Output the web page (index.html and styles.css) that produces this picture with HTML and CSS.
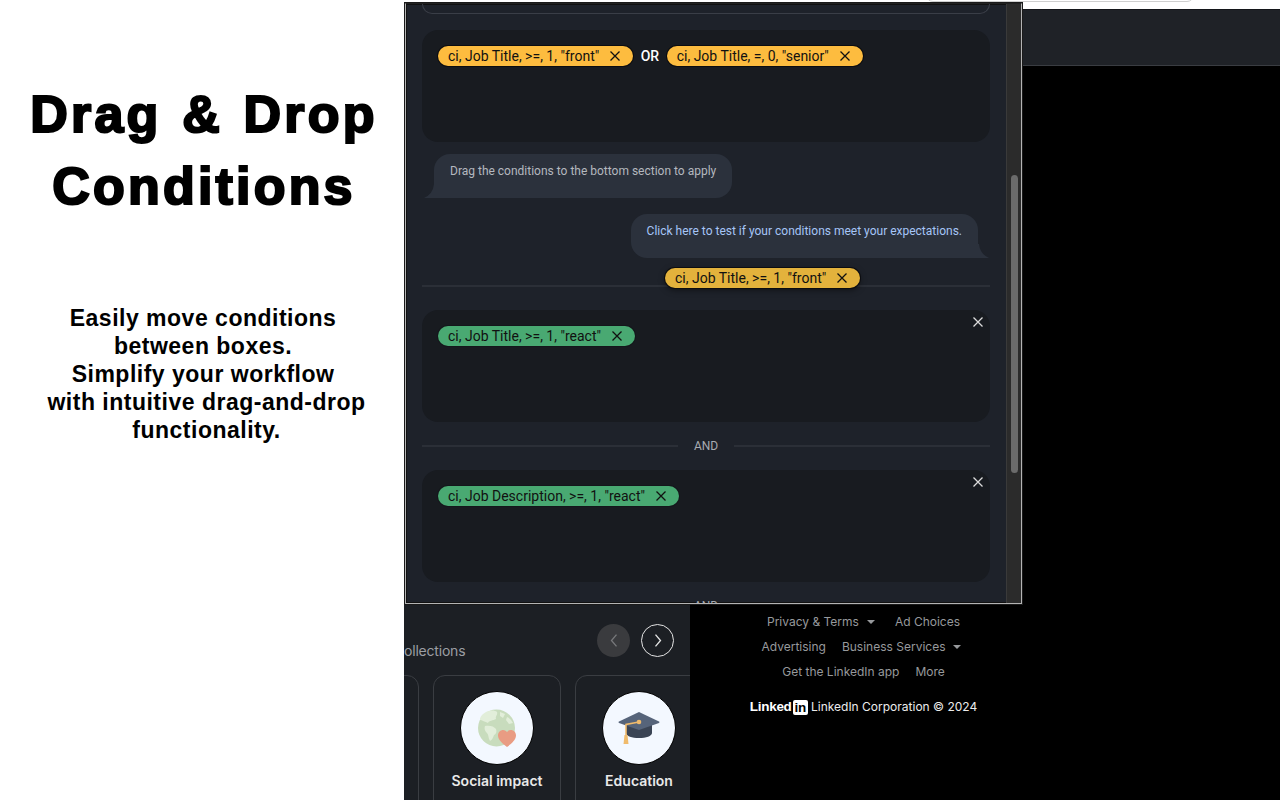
FILE: index.html
```html
<!DOCTYPE html>
<html lang="en">
<head>
<meta charset="utf-8">
<title>Drag &amp; Drop Conditions</title>
<link rel="stylesheet" href="styles.css">
</head>
<body>
<svg class="sprite" width="0" height="0" aria-hidden="true">
  <symbol id="x" viewBox="0 0 12 12"><path d="M1.5 1.5l9 9M10.5 1.5l-9 9" fill="none" stroke="currentColor" stroke-width="1.3"/></symbol>
</svg>
<div class="page">
  <section class="intro">
    <h1 class="title">Drag &amp; Drop<br>Conditions</h1>
    <p class="lead">Easily move conditions&nbsp;<br>between boxes.&nbsp;<br>Simplify your workflow&nbsp;<br>with intuitive drag-and-drop<br>functionality.</p>
  </section>

  <section class="backdrop">
    <div class="omnibox"></div>
    <div class="topbar"></div>
    <div class="lower">
      <div class="feed">
        <div class="feed-head">
          <span class="feed-title">ollections</span>
          <div class="feed-nav">
            <span class="nav-btn nav-off"><svg viewBox="0 0 12 18" class="chev"><path d="M9 2L3 9l6 7" fill="none" stroke="currentColor" stroke-width="1.6"/></svg></span>
            <span class="nav-btn nav-on"><svg viewBox="0 0 12 18" class="chev"><path d="M3 2l6 7-6 7" fill="none" stroke="currentColor" stroke-width="1.6"/></svg></span>
          </div>
        </div>
        <div class="cards">
          <div class="card"></div>
          <div class="card">
            <span class="disc">
              <svg viewBox="0 0 72 72" class="disc-art">
                <circle cx="35.500" cy="36" r="18.500" fill="#c8dcbd"/>
                <path d="M25 20c4-2 9-2 11 0 1 3-2 4-1 7-3 2-7 1-8 4-3-1-6-3-8-3 0-4 3-6 6-8zM39 20l5 2-2 4-3-2zM46 25c3 1 5 4 6 6l-4 1-3-4zM24 34c4-1 9 0 11 3 1 3 0 5-2 6-1 3-2 5-4 6-2-3-1-6-3-8-2-2-3-4-2-7z" fill="#e2eeda"/>
                <path d="M46 55c-4-3-9-7-9-11.500 0-3.300 2.500-5.500 5.200-5.500 1.700 0 3 1 3.800 2.200.8-1.200 2.100-2.200 3.800-2.200 2.700 0 5.200 2.200 5.200 5.500 0 4.500-5 8.500-9 11.500z" fill="#e99c83"/>
              </svg>
            </span>
            <span class="card-label">Social impact</span>
          </div>
          <div class="card">
            <span class="disc">
              <svg viewBox="0 0 72 72" class="disc-art">
                <path d="M23 30h26v11c0 3-6 5-13 5s-13-2-13-5z" fill="#3a4454"/>
                <path d="M36 20l20 9.500c.6.4.6 1 0 1.400L36 38 16 31c-.7-.4-.7-1 0-1.400z" fill="#56647a"/>
                <path d="M36 30l-13 2.500V50" fill="none" stroke="#f0bb6c" stroke-width="1.600"/>
                <path d="M21.500 43h3l1 9h-5z" fill="#f0bb6c"/>
                <circle cx="36" cy="30" r="2.300" fill="#f0bb6c"/>
              </svg>
            </span>
            <span class="card-label">Education</span>
          </div>
        </div>
      </div>
      <footer class="aside">
        <nav class="foot-links">
          <div class="foot-row"><span>Privacy &amp; Terms<i class="caret"></i></span><span>Ad Choices</span></div>
          <div class="foot-row"><span>Advertising</span><span>Business Services<i class="caret"></i></span></div>
          <div class="foot-row"><span>Get the LinkedIn app</span><span>More</span></div>
        </nav>
        <div class="brand">
          <span class="logo">Linked<b class="logo-in">in</b></span>
          <span>LinkedIn Corporation © 2024</span>
        </div>
      </footer>
    </div>
  </section>

  <div class="window">
    <div class="scroller">
      <div class="stub"></div>
      <div class="box box-first">
        <span class="chip chip-amber">ci, Job Title, &gt;=, 1, "front"<svg class="chip-x"><use href="#x"/></svg></span>
        <span class="or">OR</span>
        <span class="chip chip-amber">ci, Job Title, =, 0, "senior"<svg class="chip-x"><use href="#x"/></svg></span>
      </div>
      <div class="bubble bubble-in">Drag the conditions to the bottom section to apply</div>
      <div class="bubble bubble-out">Click here to test if your conditions meet your expectations.</div>
      <div class="rule"></div>
      <div class="box">
        <span class="chip chip-green">ci, Job Title, &gt;=, 1, "react"<svg class="chip-x"><use href="#x"/></svg></span>
        <svg class="box-x"><use href="#x"/></svg>
      </div>
      <div class="and"><span>AND</span></div>
      <div class="box">
        <span class="chip chip-green">ci, Job Description, &gt;=, 1, "react"<svg class="chip-x"><use href="#x"/></svg></span>
        <svg class="box-x"><use href="#x"/></svg>
      </div>
      <div class="and"><span>AND</span></div>
    </div>
    <div class="track"><div class="thumb"></div></div>
    <span class="chip chip-drag">ci, Job Title, &gt;=, 1, "front"<svg class="chip-x"><use href="#x"/></svg></span>
  </div>
</div>
</body>
</html>
```
FILE: styles.css
```css
* { box-sizing: border-box; }
html, body { margin: 0; padding: 0; background: #fff; }
.sprite { position: absolute; }
.page {
  position: relative;
  display: flex;
  width: 1280px;
  height: 800px;
  overflow: hidden;
}

/* Left text column */
.intro {
  flex: 0 0 404px;
  padding: 78px 0 0 4px;
  text-align: center;
  color: #000;
  font-family: "Liberation Sans", Arial, sans-serif;
}
.title {
  margin: 0;
  font-size: 52px;
  line-height: 72px;
  font-weight: 700;
  letter-spacing: 3.2px;
  word-spacing: 3px;
  -webkit-text-stroke: 2.2px #000;
}
.lead {
  margin: 82px 0 0 5px;
  font-size: 23px;
  line-height: 28px;
  font-weight: 700;
  letter-spacing: 0.5px;
}

/* Page behind the popup */
.backdrop {
  position: relative;
  flex: 1;
  display: flex;
  flex-direction: column;
  padding-top: 9px;
  background: #fff;
}
.omnibox {
  position: absolute;
  top: -12px;
  left: 522px;
  width: 268px;
  height: 14px;
  border: 1px solid #cfcfcf;
  border-radius: 8px;
  background: #fff;
}
.topbar {
  flex: 0 0 57px;
  background: #1f2227;
  border-top: 1px solid #14161a;
  border-bottom: 1px solid #3a3d42;
}
.lower { flex: 1; display: flex; background: #000; }
.feed {
  flex: 0 0 286px;
  display: flex;
  flex-direction: column;
  justify-content: flex-end;
  overflow: hidden;
  background: #1c1f24;
  font-family: Inter, "Liberation Sans", sans-serif;
}
.feed-head {
  display: flex;
  justify-content: space-between;
  align-items: flex-start;
  padding-right: 16px;
  margin-bottom: 16px;
}
.feed-title {
  padding-top: 18px;
  font-size: 14px;
  line-height: 17px;
  letter-spacing: -0.2px;
  color: #9b9ea3;
}
.feed-nav { display: flex; gap: 11px; }
.nav-btn {
  display: flex;
  align-items: center;
  justify-content: center;
  width: 33px;
  height: 33px;
  border-radius: 50%;
}
.nav-off { background: #3a3b3e; color: #77787b; }
.nav-on { border: 1px solid #e4e4e4; color: #e4e4e4; }
.chev { width: 10px; height: 15px; }
.cards {
  display: flex;
  gap: 14px;
  height: 125px;
  margin-left: -113px;
}
.card {
  flex: 0 0 128px;
  height: 140px;
  display: flex;
  flex-direction: column;
  align-items: center;
  padding-top: 15px;
  border: 1px solid #3a3d42;
  border-radius: 12px;
}
.disc {
  display: block;
  width: 74px;
  height: 74px;
  border-radius: 50%;
  background: #f3f8ff;
  border: 1px solid #000;
}
.disc-art { display: block; width: 72px; height: 72px; }
.card-label {
  margin-top: 7px;
  font-size: 14px;
  line-height: 18px;
  font-weight: 600;
  color: #e9e9e9;
  white-space: nowrap;
}

/* Footer on black */
.aside {
  flex: 0 0 347px;
  padding: 543px 0 0 0;
  font-family: Inter, "Liberation Sans", sans-serif;
  font-size: 12px;
  color: #97999c;
}
.foot-links { display: flex; flex-direction: column; }
.foot-row {
  display: flex;
  justify-content: center;
  gap: 16px;
  height: 25px;
  line-height: 25px;
  white-space: nowrap;
}
.caret {
  display: inline-block;
  margin: 0 4px 0 8px;
  vertical-align: 2px;
  border-left: 4px solid transparent;
  border-right: 4px solid transparent;
  border-top: 4px solid #97999c;
}
.brand {
  display: flex;
  justify-content: center;
  align-items: center;
  gap: 3px;
  margin-top: 14px;
  color: #ececec;
  line-height: 18px;
  white-space: nowrap;
}
.logo {
  display: inline-flex;
  align-items: center;
  font-family: "Liberation Sans", Arial, sans-serif;
  font-size: 13.500px;
  font-weight: 700;
  color: #fff;
  letter-spacing: -0.3px;
}
.logo-in {
  margin-left: 1px;
  padding: 0 2px;
  height: 15px;
  line-height: 15px;
  border-radius: 2px;
  background: #fff;
  color: #000;
}

/* Popup window */
.window {
  position: absolute;
  top: 3px;
  left: 405px;
  width: 617px;
  height: 601px;
  display: flex;
  border: 1px solid #b4b4b4;
  border-top-color: #222;
  box-shadow: 0 0 0 1px #1a1a1a, inset 0 0 0 1px #111;
  background: #1e222a;
  font-family: Roboto, "Liberation Sans", sans-serif;
}
.scroller {
  flex: 1;
  min-width: 0;
  display: flex;
  flex-direction: column;
  padding: 0 16px;
  overflow: hidden;
}
.stub {
  flex: 0 0 10px;
  margin-bottom: 16px;
  border: 1px solid #3a3e47;
  border-top: 0;
  border-radius: 0 0 12px 12px;
}
.box {
  position: relative;
  flex: 0 0 112px;
  display: flex;
  align-items: flex-start;
  gap: 8px;
  padding: 16px;
  border-radius: 16px;
  background: #181b20;
}
.chip {
  display: inline-flex;
  align-items: center;
  height: 20px;
  padding: 0 12px 0 10px;
  border-radius: 10px;
  box-shadow: 0 0 0 1px #0c0d10;
  color: #111;
  font-family: Roboto, "Liberation Sans", sans-serif;
  font-size: 14px;
  white-space: nowrap;
}
.chip-amber { background: #fdbc3f; }
.chip-green { background: #49a972; box-shadow: 0 0 0 1px #14171b; }
.chip-x { width: 12px; height: 12px; margin-left: 10px; color: #111; }
.chip-drag {
  position: absolute;
  top: 264px;
  left: 259px;
  background: #e3b23c;
  box-shadow: 0 0 0 1px #0c0d10, 0 2px 6px rgba(0, 0, 0, .5);
}
.or {
  margin: 0 -0.5px;
  color: #fff;
  font-size: 14px;
  font-weight: 500;
  line-height: 20px;
}
.box-x {
  position: absolute;
  top: 6px;
  right: 6px;
  width: 12px;
  height: 12px;
  color: #dcdcdc;
}
.bubble {
  position: relative;
  flex: 0 0 44px;
  padding: 9px 16px 0;
  border-radius: 16px;
  background: #2b313c;
  font-size: 12px;
  line-height: 16px;
  white-space: nowrap;
}
.bubble::after {
  content: "";
  position: absolute;
  bottom: 0;
  width: 14px;
  height: 14px;
  background: #2b313c;
}
.bubble-in {
  align-self: flex-start;
  margin: 12px 0 16px 12px;
  border-bottom-left-radius: 0;
  color: #b4b8bf;
}
.bubble-in::after {
  left: -10px;
  clip-path: path("M14 0 V14 H0 Q9 10 10 0 Z");
}
.bubble-out {
  align-self: flex-end;
  margin-right: 12px;
  border-bottom-right-radius: 0;
  color: #a6c5f7;
}
.bubble-out::after {
  right: -11px;
  clip-path: path("M0 0 V14 H14 Q5 10 4 0 Z");
}
.rule {
  flex: 0 0 2px;
  margin: 27px 0 23px;
  background: #2b2f37;
}
.and {
  flex: 0 0 48px;
  display: flex;
  align-items: center;
  gap: 16px;
  color: #a8abb1;
  font-size: 12px;
}
.and::before, .and::after {
  content: "";
  flex: 1;
  height: 2px;
  background: #2b2f37;
}
.track {
  flex: 0 0 15px;
  padding: 171px 3px 0 4px;
  background: #2b2b2b;
  border-left: 1px solid #3a3a3a;
}
.thumb {
  height: 298px;
  border-radius: 4px;
  background: #6b6b6b;
}
```
